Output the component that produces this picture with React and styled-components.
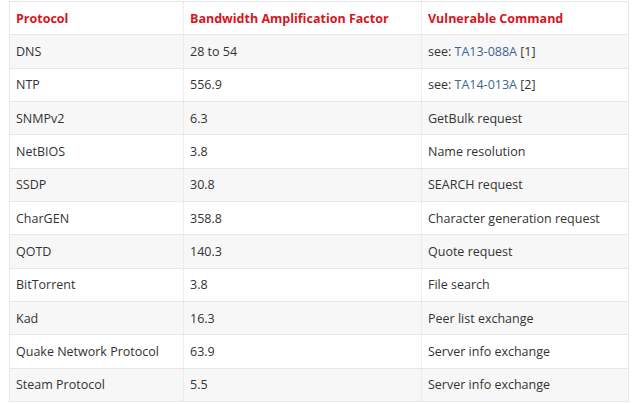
import React from "react";
import styled, { createGlobalStyle } from "styled-components";

const Global = createGlobalStyle`
  html, body { margin: 0; padding: 0; background: #fff; }
  body { font-family: "Open Sans", "Liberation Sans", sans-serif; }
`;

const Wrap = styled.div`
  padding: 1px 11px 0 9px;
`;

const Table = styled.table`
  width: 620px;
  border-collapse: collapse;
  font-family: "Open Sans", "Liberation Sans", sans-serif;
  font-size: 12.5px;
  color: #333;
  border: 1px solid #e7e7e7;
`;

const Row = styled.tr`
  height: 33.33px;
  background: ${(p) => (p.$striped ? "#f7f7f7" : "#fff")};
  border-bottom: 1px solid #e7e7e7;
`;

const Th = styled.th`
  text-align: left;
  font-weight: 700;
  color: #d9151b;
  padding: 0 6px;
  width: ${(p) => p.$w};
  border-left: 1px dotted #e2e2e2;
  &:first-child { border-left: none; }
`;

const Td = styled.td`
  padding: 0 6px;
  border-left: 1px dotted #e2e2e2;
  &:first-child { border-left: none; }
`;

const Link = styled.a`
  color: #3c6594;
  text-decoration: none;
`;

const rows = [
  ["DNS", "28 to 54", { see: "TA13-088A", ref: "[1]" }],
  ["NTP", "556.9", { see: "TA14-013A", ref: "[2]" }],
  ["SNMPv2", "6.3", "GetBulk request"],
  ["NetBIOS", "3.8", "Name resolution"],
  ["SSDP", "30.8", "SEARCH request"],
  ["CharGEN", "358.8", "Character generation request"],
  ["QOTD", "140.3", "Quote request"],
  ["BitTorrent", "3.8", "File search"],
  ["Kad", "16.3", "Peer list exchange"],
  ["Quake Network Protocol", "63.9", "Server info exchange"],
  ["Steam Protocol", "5.5", "Server info exchange"],
];

export default function App() {
  return (
    <Wrap>
      <Global />
      <Table>
        <thead>
          <Row>
            <Th $w="161px">Protocol</Th>
            <Th $w="225px">Bandwidth Amplification Factor</Th>
            <Th>Vulnerable Command</Th>
          </Row>
        </thead>
        <tbody>
          {rows.map((r, i) => (
            <Row key={r[0]} $striped={i % 2 === 0}>
              <Td>{r[0]}</Td>
              <Td>{r[1]}</Td>
              <Td>
                {typeof r[2] === "string" ? (
                  r[2]
                ) : (
                  <>
                    see: <Link href="#">{r[2].see}</Link> {r[2].ref}
                  </>
                )}
              </Td>
            </Row>
          ))}
        </tbody>
      </Table>
    </Wrap>
  );
}
